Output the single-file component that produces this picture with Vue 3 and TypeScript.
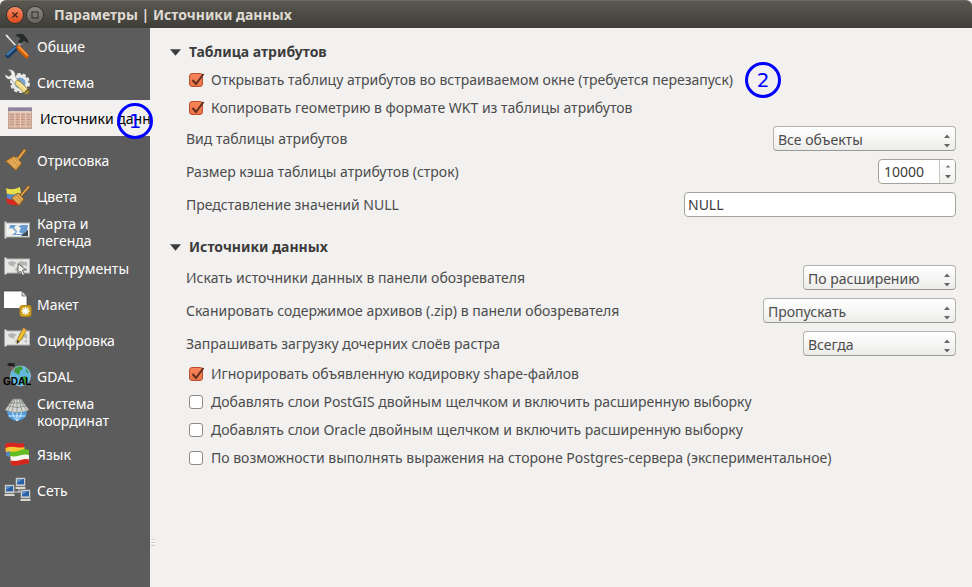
<script setup lang="ts">
import { ref } from 'vue'

interface NavItem {
  id: string
  label: string
}

interface Check {
  id: string
  label: string
  checked: boolean
  marker?: string
}

interface Choice {
  id: string
  label: string
  value: string
  size: string
}

const nav: NavItem[] = [
  { id: 'general', label: 'Общие' },
  { id: 'system', label: 'Система' },
  { id: 'sources', label: 'Источники данных' },
  { id: 'render', label: 'Отрисовка' },
  { id: 'colors', label: 'Цвета' },
  { id: 'map', label: 'Карта и легенда' },
  { id: 'tools', label: 'Инструменты' },
  { id: 'composer', label: 'Макет' },
  { id: 'digitize', label: 'Оцифровка' },
  { id: 'gdal', label: 'GDAL' },
  { id: 'crs', label: 'Система координат' },
  { id: 'locale', label: 'Язык' },
  { id: 'network', label: 'Сеть' },
]
const active = ref('sources')

const tableChecks = ref<Check[]>([
  { id: 'dock', label: 'Открывать таблицу атрибутов во встраиваемом окне (требуется перезапуск)', checked: true, marker: '2' },
  { id: 'wkt', label: 'Копировать геометрию в формате WKT из таблицы атрибутов', checked: true },
])
const tableView = ref('Все объекты')
const cacheSize = ref('10000')
const nullText = ref('NULL')

function step(delta: number): void {
  cacheSize.value = String(Number(cacheSize.value) + delta)
}

const choices = ref<Choice[]>([
  { id: 'scan', label: 'Искать источники данных в панели обозревателя', value: 'По расширению', size: 'w-scan' },
  { id: 'zip', label: 'Сканировать содержимое архивов (.zip) в панели обозревателя', value: 'Пропускать', size: 'w-zip' },
  { id: 'sub', label: 'Запрашивать загрузку дочерних слоёв растра', value: 'Всегда', size: 'w-scan' },
])
const sourceChecks = ref<Check[]>([
  { id: 'enc', label: 'Игнорировать объявленную кодировку shape-файлов', checked: true },
  { id: 'pg', label: 'Добавлять слои PostGIS двойным щелчком и включить расширенную выборку', checked: false },
  { id: 'ora', label: 'Добавлять слои Oracle двойным щелчком и включить расширенную выборку', checked: false },
  { id: 'expr', label: 'По возможности выполнять выражения на стороне Postgres-сервера (экспериментальное)', checked: false },
])
</script>

<template>
  <div class="window">
    <header class="titlebar">
      <button class="winbtn close" type="button" aria-label="Закрыть">
        <svg viewBox="0 0 16 16"><path d="M5.4 5.4l5.2 5.2M10.6 5.4l-5.2 5.2" stroke="#4a2418" stroke-width="1.4" /></svg>
      </button>
      <button class="winbtn max" type="button" aria-label="Развернуть">
        <svg viewBox="0 0 16 16"><rect x="5" y="5" width="6" height="6" fill="none" stroke="#3a3934" stroke-width="1.2" /></svg>
      </button>
      <h1>Параметры | Источники данных</h1>
    </header>

    <div class="body">
      <nav class="sidebar">
        <button
          v-for="item in nav"
          :key="item.id"
          type="button"
          class="nav-item"
          :class="{ active: item.id === active, tall: item.id === 'sources' || item.id === 'crs' }"
          @click="active = item.id"
        >
          <svg class="icon" viewBox="0 0 26 26">
            <template v-if="item.id === 'general'">
              <path d="M2 2l12 13" stroke="#e4e4e0" stroke-width="1.6" />
              <path d="M1.500 1l3 2.500-1 1z" fill="#fff" />
              <path d="M18 9L13.500 14" stroke="#aaa" stroke-width="2.500" />
              <path d="M11 2.500q4-3 8.500-1l3.500 4 2 5-3.500-2-2-.5-2.500 3-3-2.500 2.500-3q-1.500-2-5.500-3z" fill="#252b2a" />
              <path d="M12 15L4 22.500" stroke="#163a64" stroke-width="5" stroke-linecap="round" />
              <path d="M11 14.500L3.500 21.500" stroke="#477fb8" stroke-width="1.800" stroke-linecap="round" />
              <path d="M14.500 14.500l8 8.500" stroke="#cf5a00" stroke-width="4.500" stroke-linecap="round" />
              <path d="M15 14l8 8" stroke="#ff9838" stroke-width="1.800" stroke-linecap="round" />
            </template>
            <template v-else-if="item.id === 'system'">
              <circle cx="16" cy="14" r="7" fill="#7aa5d2" stroke="#e9eae8" stroke-width="3" />
              <circle cx="16" cy="14" r="9" fill="none" stroke="#e9eae8" stroke-width="2" stroke-dasharray="3.500 2.100" />
              <path d="M4 1c5-1 8 2 7 6l4 6-3 3-5-6C4 11 1 9 1 5.500l4 2 2.500-2-1-3z" fill="#f0f0ed" stroke="#777" stroke-width=".6" />
              <path d="M14 14l8.500 8.500" stroke="#8e772a" stroke-width="6" stroke-linecap="round" />
              <path d="M13.500 14l8 8" stroke="#f0da83" stroke-width="4.500" stroke-linecap="round" />
              <path d="M15.500 13.500l7 7" stroke="#fff3bd" stroke-width="1.200" />
              <path d="M20.500 24l4-4" stroke="#5d532e" stroke-width="1.500" />
            </template>
            <template v-else-if="item.id === 'sources'">
              <rect x="1.500" y="3" width="23" height="20" fill="#dbb5a3" stroke="#c6a493" />
              <rect x="1" y="2.500" width="24" height="3.500" fill="#8d84a4" />
              <path d="M2 7h22" stroke="#eee3e0" />
              <path d="M3 9.500h20M3 12h20M3 14.500h20M3 17h20M3 19.500h20" stroke="#c0937f" stroke-width="1" stroke-dasharray="4 1.300" />
              <path d="M8 7v15M13.500 7v15M19 7v15" stroke="#e9cabc" />
              <path d="M1 23.500h24" stroke="#bba092" />
            </template>
            <template v-else-if="item.id === 'render'">
              <path d="M20.500 3.500L14 12" stroke="#83500e" stroke-width="3.600" stroke-linecap="round" />
              <path d="M20.500 3.500L14 12" stroke="#dfa14c" stroke-width="2.200" stroke-linecap="round" />
              <path d="M10 9l8 7-6 7.500L1.500 14z" fill="#d79b45" stroke="#875713" stroke-width=".8" />
              <path d="M12 10l4 6.500M9.500 11l5 7M7 12.500l5 7M5 13.500l6 7.500" stroke="#f1c279" stroke-width=".8" />
            </template>
            <template v-else-if="item.id === 'colors'">
              <path d="M2 5q6 3 14-1l1 6q-7 3-14 1z" fill="#e9df4b" />
              <path d="M3 11q6 2 11-1l1 5q-6 3-12 1z" fill="#5388cf" />
              <path d="M2 15q6 3 10 1l3 6q-7 1-12-2z" fill="#db2720" />
              <path d="M24.500 4l-7 8" stroke="#83500e" stroke-width="3" stroke-linecap="round" />
              <path d="M24.500 4l-7 8" stroke="#e5a954" stroke-width="1.700" stroke-linecap="round" />
              <path d="M14 10l6 6-5 6.500L7.500 15z" fill="#d69a43" stroke="#875713" stroke-width=".8" />
              <path d="M14 11l4.500 6M11 12.500l5 6M9.500 14l5 6" stroke="#f1c279" stroke-width=".8" />
            </template>
            <template v-else-if="item.id === 'map'">
              <rect x="1.500" y="4" width="24" height="14" fill="#f5f5f2" stroke="#aaa" />
              <path d="M4 5.500h20v11H4z" fill="#e9edf0" />
              <path d="M6 6h7l1 2 3-2h7l-1 6-3 4H7l-2-4z" fill="#6a9bcf" />
              <path d="M5 10l3-1 4 4-4 3-4-1zM12 6l5 3-2 4 4 2h-7l1-3-3-3z" fill="#f4f4ee" />
              <path d="M17 17l7-6v6z" fill="#424848" />
              <path d="M1.500 2.500v17" stroke="#d9d9d5" stroke-width="2" />
            </template>
            <template v-else-if="item.id === 'tools' || item.id === 'digitize'">
              <rect x="1.500" y="4" width="24" height="14" fill="#e7e8e5" stroke="#b6b7b4" />
              <path d="M4 7l5-1 4 2-3 2 1 2-3-1-3-1zM12 12l4 2-2 3-3-2zM15 6l8 1v5l-3-2-2 3-3-3zM20 14l3-1v3z" fill="#b3b7b4" />
              <path d="M1.500 2.500v17" stroke="#e7e7e4" stroke-width="2" />
              <path v-if="item.id === 'tools'" d="M14 8.500v10l2.500-2.500 2 4.500 2-1-2-4.500h3.500z" fill="#f4f4f1" stroke="#555" stroke-width=".9" />
              <template v-else>
                <path d="M19.500 1L14 11l-1 5.500 4-3.500L22.500 3z" fill="#efc52d" stroke="#99730e" stroke-width=".8" />
                <path d="M19.500 1l3 2-1 2-3.500-1.500z" fill="#edaa50" />
                <path d="M13 16.500l.5-3.500 2 1.500z" fill="#333" />
              </template>
            </template>
            <template v-else-if="item.id === 'composer'">
              <path d="M-.5 0h18.500l5 5v12.500H-.5z" fill="#fff" stroke="#333" stroke-width=".7" />
              <path d="M18 0v5h5z" fill="#d4d4d2" stroke="#555" stroke-width=".7" />
              <rect x="16" y="14.500" width="11" height="11" rx="2" fill="#d0a11b" stroke="#b18616" />
              <path d="M21.500 16v8M17.500 20h8M18.700 17.200l5.600 5.600M24.300 17.200l-5.600 5.600" stroke="#fff" stroke-width="1.500" />
            </template>
            <template v-else-if="item.id === 'gdal'">
              <circle cx="16.500" cy="13" r="10" fill="#62b8df" stroke="#a4ddf1" stroke-width=".6" />
              <path d="M11 5l6-2 2 3-3 2-1 4-5-3zM17 14l5-1 2 4-3 5-3-4zM22 5l3 6-3-2z" fill="#3e9739" />
              <path d="M3 1.500l3-2 2 1 2.500-.5v3L7 3.500 4 2.500z" fill="#1c1c1c" />
              <path d="M7 3l4 6" stroke="#c95757" stroke-width=".8" />
              <text x="-1" y="22" class="gdal-text">GDAL</text>
            </template>
            <template v-else-if="item.id === 'crs'">
              <path d="M3 12a10 10 0 0020 0z" fill="#4f9fe0" />
              <path d="M13 12v10M8 12q1 6 5 10 4-4 5-10M4.500 17h17" fill="none" stroke="#d8efff" />
              <path d="M9 0h8l8 11q-12 5-24 0z" fill="#d6d7d3" stroke="#858985" stroke-width=".7" />
              <path d="M11 0L8 12M13 0v13M15 0l3 12M6 4h14M4 7q9 3 18 0M10 0L4 11M16 0l6 11" fill="none" stroke="#7d817e" stroke-width=".7" />
            </template>
            <template v-else-if="item.id === 'locale'">
              <path d="M1 3q5-2 10-1t9 0v12l-14 2-4-2z" fill="#dc2520" />
              <path d="M1.500 7q5-2 10-1t9 0v4l-14 2-4.500-1z" fill="#f5c734" />
              <path d="M2 11l4-1v6l-4-1z" fill="#5385c8" />
              <path d="M6 11q5 1 10-1t9 0v12q-4 0-9 1.500t-9 0z" fill="#f5f4ed" />
              <path d="M5.500 10.500q5 1 10-1t9.500-.5v5q-4-1-9.500.5t-9.500.5z" fill="#62bd22" />
              <path d="M6.500 19.500q5 1 10-.5t8.500-.5v4q-4 0-9 1.500t-9 0z" fill="#d6261c" />
            </template>
            <template v-else>
              <path d="M15 10v5M6 15h15v4" fill="none" stroke="#ddd" />
              <g v-for="p in [[12, 1], [1, 8], [17, 13]]" :key="p[0]">
                <rect :x="p[0]" :y="p[1]" width="9" height="8" fill="#e4e4df" stroke="#a5a5a0" stroke-width=".7" />
                <rect :x="p[0] + 1" :y="p[1] + 1" width="7" height="5.500" fill="#2861a4" />
                <path :d="`M${p[0] + 1} ${p[1] + 5}l6-4h-6z`" fill="#6290c7" />
                <path :d="`M${p[0] - .5} ${p[1] + 9}h10v2h-10z`" fill="#d7d6d0" />
              </g>
            </template>
          </svg>
          <span>{{ item.label }}</span>
          <i v-if="item.id === 'sources'" class="marker nav-marker">1</i>
        </button>
        <span class="grip"></span>
      </nav>

      <main class="content">
        <section>
          <h2><button type="button"><svg viewBox="0 0 12 8"><path d="M0 1h12L6 8z" /></svg>Таблица атрибутов</button></h2>
          <div class="checks">
            <label v-for="c in tableChecks" :key="c.id" class="check">
              <input v-model="c.checked" type="checkbox" />
              <svg viewBox="0 0 16 14" class="tick"><path d="M3.500 7l3.500 4L14.500 1" /></svg>
              <span>{{ c.label }}<i v-if="c.marker" class="marker check-marker">{{ c.marker }}</i></span>
            </label>
          </div>
          <div class="fields">
            <div class="field">
              <label for="view">Вид таблицы атрибутов</label>
              <div class="combo w-view">
                <select id="view" v-model="tableView"><option>Все объекты</option></select>
                <svg class="arrows" viewBox="0 0 6 14"><path d="M0 4l3-3.500L6 4zM0 10l3 3.500L6 10z" /></svg>
              </div>
            </div>
            <div class="field">
              <label for="cache">Размер кэша таблицы атрибутов (строк)</label>
              <div class="spin">
                <input id="cache" v-model="cacheSize" type="text" inputmode="numeric" />
                <div class="steps">
                  <button type="button" aria-label="Больше" @click="step(1)"><svg viewBox="0 0 6 4"><path d="M1 3.500L3 1l2 2.500z" /></svg></button>
                  <button type="button" aria-label="Меньше" @click="step(-1)"><svg viewBox="0 0 6 4"><path d="M0 0h6L3 3.500z" /></svg></button>
                </div>
              </div>
            </div>
            <div class="field">
              <label for="nulls">Представление значений NULL</label>
              <input id="nulls" v-model="nullText" class="text" type="text" />
            </div>
          </div>
        </section>

        <section>
          <h2><button type="button"><svg viewBox="0 0 12 8"><path d="M0 1h12L6 8z" /></svg>Источники данных</button></h2>
          <div class="fields">
            <div v-for="f in choices" :key="f.id" class="field">
              <label :for="f.id">{{ f.label }}</label>
              <div class="combo" :class="f.size">
                <select :id="f.id" v-model="f.value"><option>{{ f.value }}</option></select>
                <svg class="arrows" viewBox="0 0 6 14"><path d="M0 4l3-3.500L6 4zM0 10l3 3.500L6 10z" /></svg>
              </div>
            </div>
          </div>
          <div class="checks">
            <label v-for="c in sourceChecks" :key="c.id" class="check">
              <input v-model="c.checked" type="checkbox" />
              <svg viewBox="0 0 16 14" class="tick"><path d="M3.500 7l3.500 4L14.500 1" /></svg>
              <span>{{ c.label }}</span>
            </label>
          </div>
        </section>
      </main>
    </div>
  </div>
</template>

<style>
body {
  margin: 0;
  background: #f2f1f0;
}
</style>

<style scoped>
* {
  box-sizing: border-box;
}
.window {
  display: flex;
  flex-direction: column;
  min-height: 100vh;
  font: 14px/20px "Noto Sans", sans-serif;
  color: #4c4c4c;
}
button,
input,
select {
  font: inherit;
  color: inherit;
  margin: 0;
}
.titlebar {
  display: flex;
  align-items: center;
  gap: 4px;
  height: 28px;
  padding: 0 7px;
  background: linear-gradient(#5a5850, #3e3d39);
  border-top: 1px solid #6a675e;
  border-radius: 6px 6px 0 0;
}
.titlebar h1 {
  margin: 0 0 0 7px;
  font-size: 14px;
  line-height: 20px;
  color: #dfdbd2;
}
.winbtn {
  width: 16px;
  height: 16px;
  padding: 0;
  border: 0;
  border-radius: 50%;
  box-shadow: 0 0 0 1px #33322e;
}
.winbtn svg {
  display: block;
  fill: none;
}
.close {
  background: linear-gradient(#f58a64, #df4a1c);
}
.max {
  background: linear-gradient(#8a887f, #65635b);
}
.body {
  display: flex;
  flex: 1;
}
.sidebar {
  position: relative;
  flex: none;
  width: 150px;
  background: #5c5c5c;
}
.nav-item {
  position: relative;
  display: flex;
  align-items: center;
  gap: 7px;
  width: 100%;
  height: 36px;
  padding: 0 8px 0 4px;
  border: 0;
  background: none;
  color: #fff;
  text-align: left;
  line-height: 17px;
}
.nav-item.tall {
  margin-bottom: 6px;
}
.nav-item.active {
  padding: 0 0 0 7px;
  background: #f2f1f0;
  color: #000;
  white-space: nowrap;
}
.nav-item > span {
  min-width: 0;
}
.nav-item.active > span {
  overflow: hidden;
}
.icon {
  flex: 0 0 26px;
  height: 26px;
  overflow: visible;
  fill: none;
}
.gdal-text {
  font: bold 10px "Liberation Sans", sans-serif;
  fill: #000;
}
.marker {
  display: flex;
  align-items: center;
  justify-content: center;
  width: 36px;
  height: 36px;
  border: 3px solid #00f;
  border-radius: 50%;
  color: #00f;
  font: 20px/24px "DejaVu Sans", sans-serif;
}
.nav-marker {
  position: absolute;
  z-index: 1;
  top: 3px;
  right: -3px;
}
.grip {
  position: absolute;
  right: -5px;
  bottom: 41px;
  width: 4px;
  height: 7px;
  background: repeating-linear-gradient(#cfcecd 0 1px, #fff 1px 2px, transparent 2px 3px);
}
.content {
  flex: 1;
  min-width: 0;
  padding: 14px 16px 16px 20px;
}
section + section {
  margin-top: 19px;
}
h2 {
  margin: 0 0 7px;
  font-size: 14px;
  line-height: 20px;
  color: #3c3c3c;
}
h2 button {
  display: flex;
  align-items: center;
  gap: 8px;
  padding: 0;
  border: 0;
  background: none;
}
h2 svg {
  width: 11px;
  height: 8px;
  fill: #3c3c3c;
}
.checks {
  display: grid;
  gap: 6px;
  padding-left: 19px;
}
.fields {
  display: grid;
  gap: 7px;
  padding-left: 16px;
}
.checks + .fields {
  margin-top: 7px;
}
h2 + .fields {
  margin-top: 8px;
}
.fields + .checks {
  margin-top: 6px;
}
.check {
  position: relative;
  display: flex;
  align-items: center;
  gap: 8px;
  height: 22px;
  white-space: nowrap;
}
.check input {
  appearance: none;
  width: 14px;
  height: 14px;
  border: 1px solid #8e8b86;
  border-radius: 3px;
  background: #fff;
}
.check input:checked {
  border-color: #b8502c;
  background: linear-gradient(#f8845a, #ee7348);
}
.tick {
  display: none;
  position: absolute;
  left: 0;
  top: 4px;
  width: 16px;
  height: 14px;
  fill: none;
  stroke: #5c2f20;
  stroke-width: 2;
  pointer-events: none;
}
.check input:checked + .tick {
  display: block;
}
.check span {
  position: relative;
}
.check-marker {
  position: absolute;
  left: 100%;
  top: -8px;
  margin-left: 12px;
}
.field {
  display: flex;
  align-items: flex-start;
  justify-content: space-between;
  gap: 16px;
  height: 26px;
  line-height: 26px;
}
.combo {
  position: relative;
}
.combo select {
  appearance: none;
  display: block;
  width: 100%;
  height: 25px;
  padding: 0 20px 0 4px;
  border: 1px solid #b5b2ad;
  border-bottom-color: #9c9a96;
  border-radius: 4px;
  background: linear-gradient(#fff, #f6f6f5 50%, #ececeb);
}
.arrows {
  position: absolute;
  right: 6px;
  top: 8px;
  width: 6px;
  height: 14px;
  fill: #666;
  pointer-events: none;
}
.w-view {
  width: 183px;
}
.w-scan {
  width: 153px;
}
.w-zip {
  width: 193px;
}
.spin {
  display: flex;
  width: 78px;
  height: 25px;
  border: 1px solid #a5a29d;
  border-radius: 4px;
  background: #fff;
  overflow: hidden;
}
.spin input {
  flex: 1;
  min-width: 0;
  padding: 0 0 0 5px;
  border: 0;
  background: none;
  color: #3c3c3c;
}
.steps {
  display: flex;
  flex-direction: column;
  width: 16px;
  border-left: 1px solid #c9c6c2;
  background: linear-gradient(#fff, #f0f0ef);
}
.steps button {
  display: flex;
  flex: 1;
  align-items: center;
  justify-content: center;
  padding: 0;
  border: 0;
  background: none;
}
.steps svg {
  width: 6px;
  height: 4px;
  fill: #666;
}
.text {
  width: 272px;
  height: 25px;
  padding: 0 3px;
  border: 1px solid #a5a29d;
  border-radius: 4px;
  background: #fff;
  color: #3c3c3c;
}
</style>
